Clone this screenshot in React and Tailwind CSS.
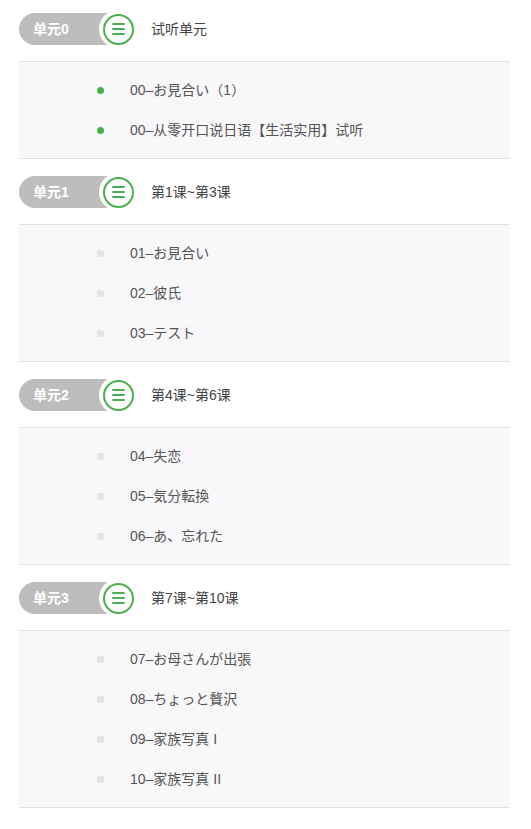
import React from 'react';

const units = [
  {
    label: '单元0',
    title: '试听单元',
    free: true,
    items: ['00–お見合い（1）', '00–从零开口说日语【生活实用】试听'],
  },
  {
    label: '单元1',
    title: '第1课~第3课',
    items: ['01–お見合い', '02–彼氏', '03–テスト'],
  },
  {
    label: '单元2',
    title: '第4课~第6课',
    items: ['04–失恋', '05–気分転換', '06–あ、忘れた'],
  },
  {
    label: '单元3',
    title: '第7课~第10课',
    items: ['07–お母さんが出張', '08–ちょっと贅沢', '09–家族写真 I', '10–家族写真 II'],
  },
];

const MenuBadge = () => (
  <div className="relative z-10 -my-[3px] -ml-[11px] flex h-[38px] w-[38px] items-center justify-center rounded-full bg-white">
    <div className="flex h-[31px] w-[31px] flex-col items-center justify-center gap-[3px] rounded-full border-2 border-[#4caf50]">
      <span className="block h-[2px] w-[13px] rounded bg-[#4caf50]" />
      <span className="block h-[2px] w-[13px] rounded bg-[#4caf50]" />
      <span className="block h-[2px] w-[13px] rounded bg-[#4caf50]" />
    </div>
  </div>
);

export default function App() {
  return (
    <div
      className="min-h-[829px] w-[531px] bg-white"
      style={{ fontFamily: '"Liberation Sans", "Noto Sans CJK SC", sans-serif' }}
    >
      <div className="ml-[19px] w-[491px]">
        {units.map((u, i) => (
          <div key={u.label}>
            <div className={`flex items-center pb-4 ${i === 0 ? 'pt-[13px]' : 'pt-[17px]'}`}>
              <div className="flex h-8 w-[91px] items-center rounded-l-full bg-[#bdbdbd] pl-[14px] text-[14px] font-bold text-white">
                {u.label}
              </div>
              <MenuBadge />
              <span className="ml-[14px] text-[14px] text-[#444]">{u.title}</span>
            </div>
            <div className="border-y border-[#e2e2e2] bg-[#f8f7f9] py-2">
              {u.items.map((t) => (
                <div key={t} className="flex h-10 items-center pl-[78px]">
                  {u.free ? (
                    <span className="block h-[7px] w-[7px] rounded-full bg-[#4caf50]" />
                  ) : (
                    <span className="block h-[7px] w-[7px] rounded-[2px] bg-[#e4e4e7]" />
                  )}
                  <span className="ml-[26px] text-[14px] text-[#555]">{t}</span>
                </div>
              ))}
            </div>
          </div>
        ))}
      </div>
    </div>
  );
}
